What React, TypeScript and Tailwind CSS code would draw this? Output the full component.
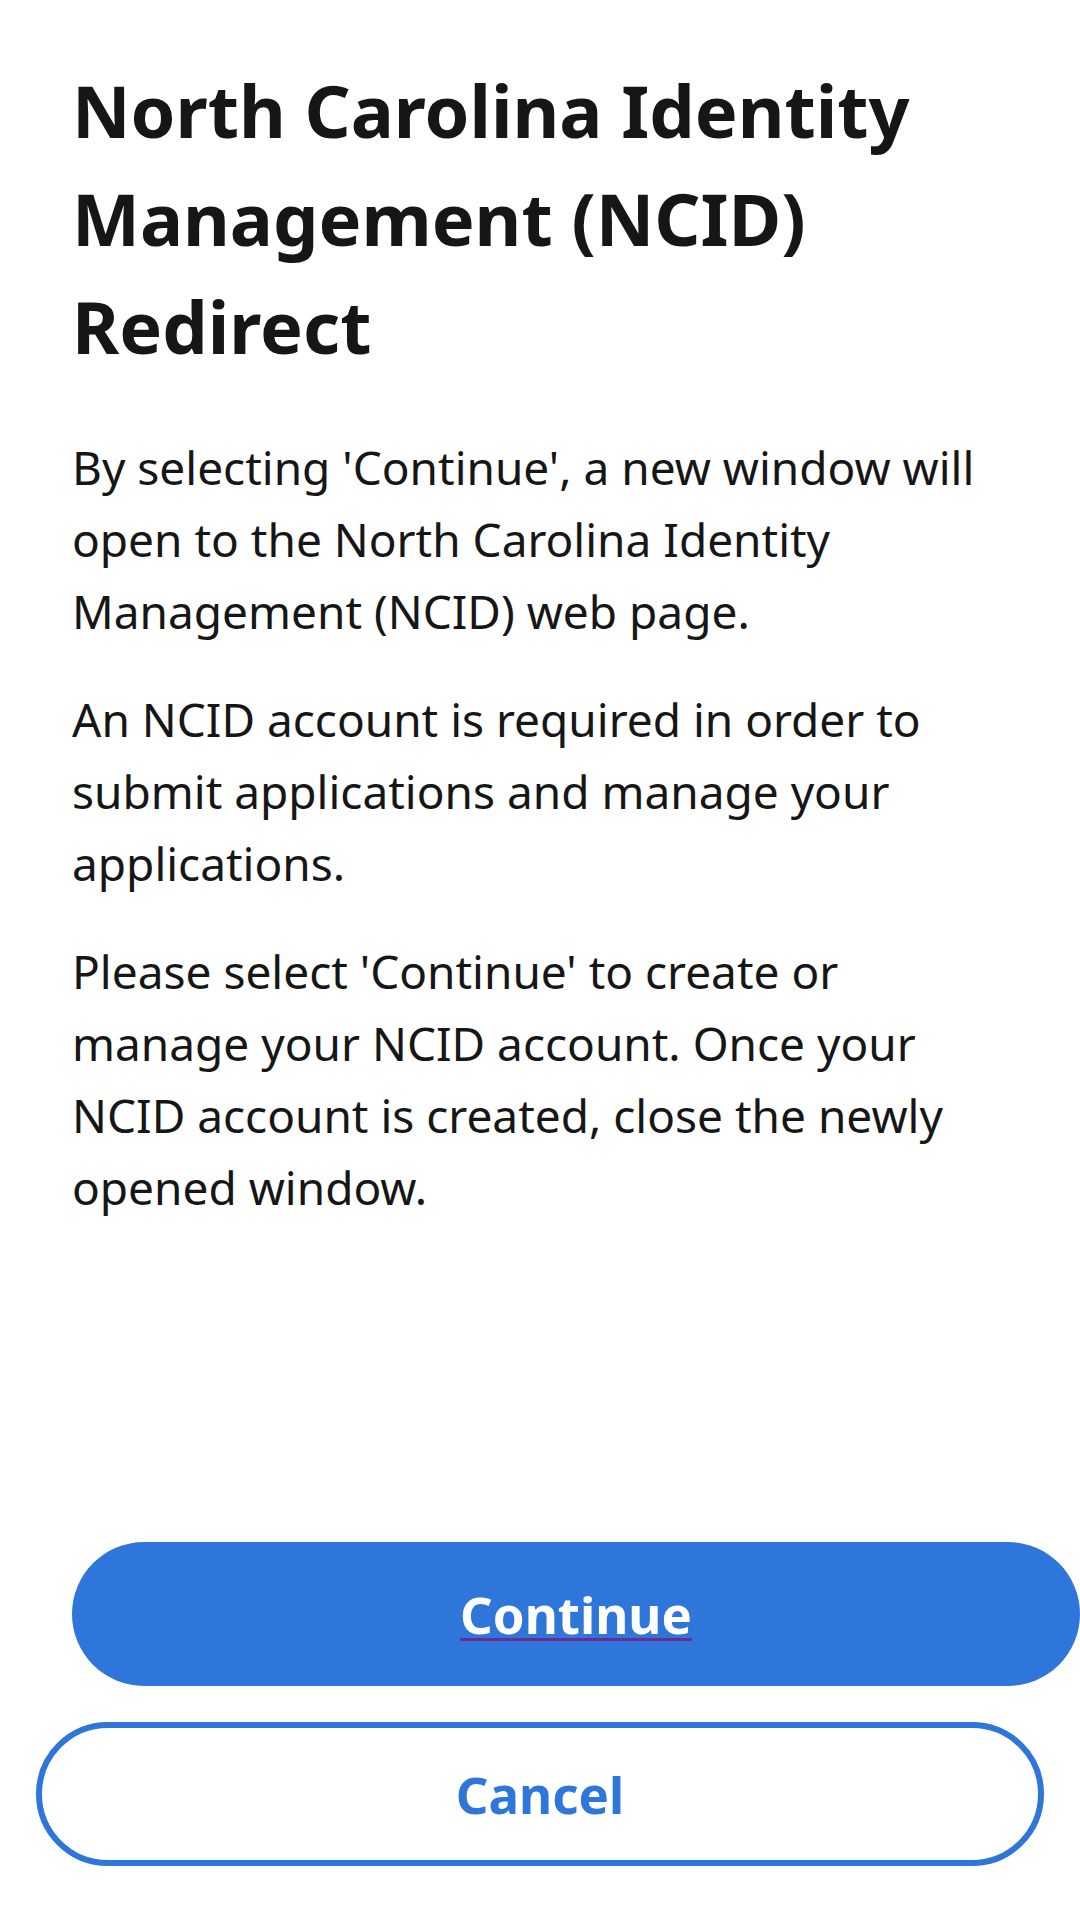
export default function App() {
  return (
    <div
      className="w-[1080px] h-[1920px] bg-white flex flex-col overflow-hidden text-[#161616]"
      style={{ fontFamily: "'Noto Sans', Roboto, sans-serif" }}
    >
      <div className="pl-[72px] pr-[20px] pt-[56px]">
        <h1 className="text-[72px] leading-[108px] font-bold">
          North Carolina Identity
          <br />
          Management (NCID)
          <br />
          Redirect
        </h1>
        <div className="mt-[51px] flex flex-col gap-[36px] text-[46px] leading-[72px]">
          <p>
            By selecting 'Continue', a new window will
            <br />
            open to the North Carolina Identity
            <br />
            Management (NCID) web page.
          </p>
          <p>
            An NCID account is required in order to
            <br />
            submit applications and manage your
            <br />
            applications.
          </p>
          <p>
            Please select 'Continue' to create or
            <br />
            manage your NCID account. Once your
            <br />
            NCID account is created, close the newly
            <br />
            opened window.
          </p>
        </div>
      </div>
      <div className="flex-1" />
      <div className="flex flex-col gap-[36px] pb-[54px]">
        <div className="pl-[72px]">
          <button className="w-[1008px] h-[144px] rounded-full bg-[#2e76d9] flex items-center justify-center">
            <span className="text-white text-[51px] font-bold underline decoration-[#6b2c91] decoration-[3px] underline-offset-[4px]">
              Continue
            </span>
          </button>
        </div>
        <div className="pl-[36px]">
          <button className="w-[1008px] h-[144px] rounded-full border-[6px] border-[#2e76d9] bg-white flex items-center justify-center">
            <span className="text-[#2e76d9] text-[51px] font-bold">Cancel</span>
          </button>
        </div>
      </div>
    </div>
  );
}
